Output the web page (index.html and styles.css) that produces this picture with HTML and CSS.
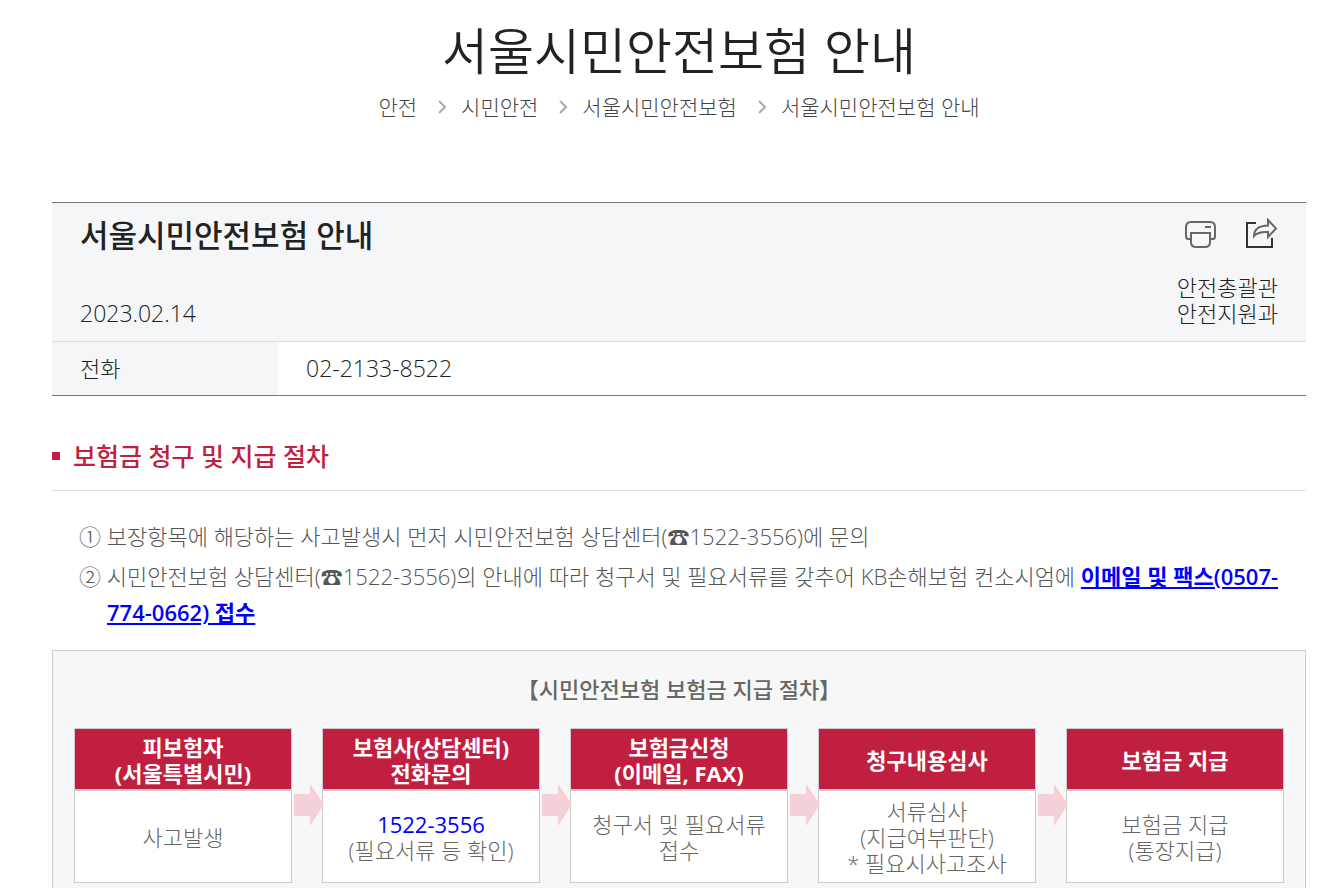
FILE: index.html
```html
<!DOCTYPE html>
<html lang="ko">
<head>
<meta charset="utf-8">
<meta name="viewport" content="width=device-width, initial-scale=1">
<title>서울시민안전보험 안내</title>
<link rel="stylesheet" href="styles.css">
</head>
<body>
<main class="page">
  <header class="page-head">
    <h1 class="page-title">서울시민안전보험 안내</h1>
    <nav aria-label="현재 위치">
      <ol class="crumbs">
        <li><a href="#">안전</a></li>
        <li><svg class="chevron" viewBox="0 0 8 14" aria-hidden="true"><path d="M1 1l6 6-6 6"/></svg><a href="#">시민안전</a></li>
        <li><svg class="chevron" viewBox="0 0 8 14" aria-hidden="true"><path d="M1 1l6 6-6 6"/></svg><a href="#">서울시민안전보험</a></li>
        <li><svg class="chevron" viewBox="0 0 8 14" aria-hidden="true"><path d="M1 1l6 6-6 6"/></svg><a href="#">서울시민안전보험 안내</a></li>
      </ol>
    </nav>
  </header>

  <section class="info">
    <div class="info-top">
      <div class="info-row">
        <h2 class="info-title">서울시민안전보험 안내</h2>
        <div class="tools">
          <button class="tool" type="button" aria-label="인쇄">
            <svg viewBox="0 0 34 32" aria-hidden="true"><path class="soft" d="M6 21H4.500Q2 21 2 18.500V9Q2 4 7 4H26Q31 4 31 9V18.500Q31 21 28.500 21H27M21 9h6"/><path class="soft" d="M7 15H26V24Q26 29 21 29H12Q7 29 7 24Z"/></svg>
          </button>
          <button class="tool" type="button" aria-label="공유">
            <svg viewBox="0 0 34 32" aria-hidden="true"><path class="frame" d="M12 5H3V29H28V20"/><path class="soft" d="M10 18Q10 8 24 7.500V2L32 10.500L24 19V14Q14 13.500 10 18Z"/></svg>
          </button>
        </div>
      </div>
      <div class="info-row info-meta">
        <time class="num" datetime="2023-02-14">2023.02.14</time>
        <p class="office">안전총괄관<br>안전지원과</p>
      </div>
    </div>
    <dl class="contact">
      <dt>전화</dt>
      <dd class="num">02-2133-8522</dd>
    </dl>
  </section>

  <section>
    <h3 class="section-title">보험금 청구 및 지급 절차</h3>
    <div class="steps">
      <p>① 보장항목에 해당하는 사고발생시 먼저 시민안전보험 상담센터(☎1522-3556)에 문의</p>
      <p>② 시민안전보험 상담센터(☎1522-3556)의 안내에 따라 청구서 및 필요서류를 갖추어 KB손해보험 컨소시엄에 <a class="link" href="#">이메일 및 팩스(0507-774-0662) 접수</a></p>
    </div>
    <div class="panel">
      <h4 class="panel-title">【시민안전보험 보험금 지급 절차】</h4>
      <ol class="flow">
        <li class="card"><h5 class="card-head">피보험자<br>(서울특별시민)</h5><p class="card-body">사고발생</p></li>
        <li class="card"><svg class="arrow" viewBox="0 0 30 42" aria-hidden="true"><path d="M0 10H16V0L30 20L16 42V32H0Z"/></svg><h5 class="card-head">보험사(상담센터)<br>전화문의</h5><p class="card-body"><span><a class="phone" href="tel:1522-3556">1522-3556</a><br>(필요서류 등 확인)</span></p></li>
        <li class="card"><svg class="arrow" viewBox="0 0 30 42" aria-hidden="true"><path d="M0 10H16V0L30 20L16 42V32H0Z"/></svg><h5 class="card-head">보험금신청<br>(이메일, FAX)</h5><p class="card-body">청구서 및 필요서류<br>접수</p></li>
        <li class="card"><svg class="arrow" viewBox="0 0 30 42" aria-hidden="true"><path d="M0 10H16V0L30 20L16 42V32H0Z"/></svg><h5 class="card-head">청구내용심사</h5><p class="card-body">서류심사<br>(지급여부판단)<br>* 필요시사고조사</p></li>
        <li class="card"><svg class="arrow" viewBox="0 0 30 42" aria-hidden="true"><path d="M0 10H16V0L30 20L16 42V32H0Z"/></svg><h5 class="card-head">보험금 지급</h5><p class="card-body">보험금 지급<br>(통장지급)</p></li>
      </ol>
    </div>
  </section>
</main>
</body>
</html>
```

FILE: styles.css
```css
* { box-sizing: border-box; }

body {
  margin: 0;
  background: #fff;
  color: #222;
  font: 300 22px/26px "Open Sans", "Noto Sans CJK KR", sans-serif;
}

h1, h2, h3, h4, h5, p, ol, dl, dd { margin: 0; padding: 0; }
ol { list-style: none; }

.page { padding: 12px 19px 0 52px; }

.page-head { text-align: center; }
.page-title {
  font-family: "Noto Sans CJK KR", sans-serif;
  font-size: 50px;
  line-height: 72px;
  font-weight: 350;
}

.crumbs {
  display: flex;
  justify-content: center;
  gap: 21px;
  margin-top: 8px;
  font-size: 21px;
  line-height: 30px;
}
.crumbs li { display: flex; align-items: center; gap: 15px; }
.crumbs a { color: #444; text-decoration: none; }
.chevron { width: 8px; height: 14px; fill: none; stroke: #aaa; stroke-width: 2; }

.info {
  margin-top: 80px;
  border-top: 1px solid #777;
  border-bottom: 1px solid #777;
}
.info-top {
  padding: 12px 28px 15px;
  background: #f4f6f8;
  border-bottom: 1px solid #ddd;
}
.info-row { display: flex; justify-content: space-between; }
.info-title { font-size: 31px; line-height: 40px; font-weight: 500; }
.tools { display: flex; align-items: flex-start; gap: 26px; padding-top: 3px; }
.tool { padding: 0; border: 0; background: none; cursor: pointer; }
.tool svg { display: block; width: 34px; height: 32px; fill: none; stroke-width: 2; }
.soft { stroke: #666; }
.frame { stroke: #333; }
.info-meta { align-items: flex-end; margin-top: 19px; }
.num { font-size: 23px; }
.office { font-size: 22px; }

.contact { display: grid; grid-template-columns: 226px 1fr; }
.contact dt, .contact dd { padding: 13px 28px 14px; }
.contact dt { background: #f4f6f8; }

.section-title {
  display: flex;
  align-items: center;
  gap: 13px;
  margin-top: 40px;
  padding-bottom: 14px;
  border-bottom: 1px solid #ddd;
  color: #c11f3f;
  font-size: 25px;
  line-height: 40px;
  font-weight: 500;
}
.section-title::before { content: ""; width: 8px; height: 8px; background: #c11f3f; }

.steps {
  display: grid;
  gap: 4px;
  margin-top: 27px;
  color: #555;
  line-height: 36px;
}
.steps p { padding-left: 55px; text-indent: -28px; }
.link { color: #00f; font-weight: 600; }

.panel {
  margin-top: 20px;
  padding: 20px 21px 0;
  background: #f7f7f7;
  border: 1px solid #ccc;
  color: #666;
  text-align: center;
}
.panel-title { font-size: 22px; line-height: 36px; font-weight: 500; }
.flow {
  display: grid;
  grid-template-columns: repeat(5, 1fr);
  gap: 30px;
  margin-top: 21px;
  padding-bottom: 5px;
}
.card {
  position: relative;
  display: grid;
  grid-template-rows: 61px 93px;
  background: #fff;
  border: 1px solid #ccc;
  border-top: 0;
}
.card-head {
  display: grid;
  place-content: center;
  padding-top: 2px;
  background: #c11f3f;
  border-top: 1px solid #ccc;
  color: #fff;
  font-size: 22px;
  font-weight: 700;
}
.card-body {
  display: grid;
  place-content: center;
  border-top: 2px solid #ccc;
}
.phone { color: #00f; font-weight: 500; text-decoration: none; }
.arrow {
  position: absolute;
  left: -29px;
  top: 56px;
  width: 30px;
  height: 42px;
  fill: #f4d1d9;
}
```
